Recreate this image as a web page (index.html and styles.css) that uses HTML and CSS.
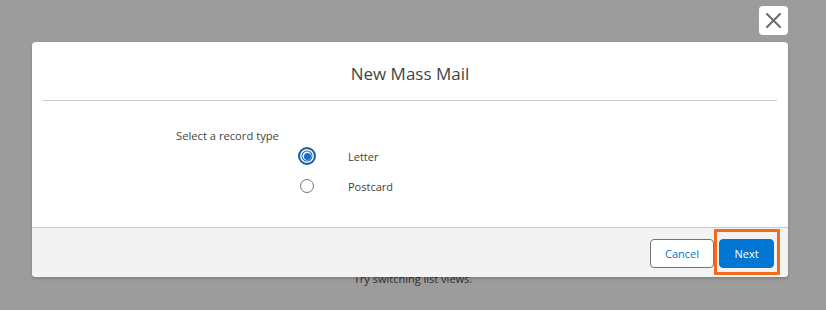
FILE: index.html
```
<!DOCTYPE html>
<html>
<head>
<meta charset="utf-8">
<link rel="stylesheet" href="styles.css">
</head>
<body>
<div class="page">
  <p class="empty-hint">Try switching list views.</p>
</div>
<button class="close-btn" aria-label="Close">
  <svg width="15" height="15" viewBox="0 0 15 15"><path d="M1 1L14 14M14 1L1 14" stroke="#6b6b6b" stroke-width="2" stroke-linecap="round"/></svg>
</button>
<section class="modal">
  <header class="modal-header">
    <h2 class="modal-title">New Mass Mail</h2>
  </header>
  <div class="modal-body">
    <div class="field-label">Select a record type</div>
    <div class="options">
      <label class="option">
        <span class="radio-box"><span class="radio checked"><span class="dot"></span></span></span>
        <span class="option-text">Letter</span>
      </label>
      <label class="option">
        <span class="radio-box"><span class="radio"></span></span>
        <span class="option-text">Postcard</span>
      </label>
    </div>
  </div>
  <footer class="modal-footer">
    <button class="btn btn-neutral">Cancel</button>
    <button class="btn btn-brand">Next</button>
    <span class="highlight"></span>
  </footer>
</section>
</body>
</html>
```
FILE: styles.css
```
html, body {
  margin: 0;
  padding: 0;
}
body {
  width: 826px;
  height: 310px;
  background: #9c9c9c;
  font-family: "Open Sans", "Noto Sans", sans-serif;
  color: #3e3e3c;
  overflow: hidden;
  position: relative;
}
.page {
  padding-top: 270px;
  text-align: center;
}
.empty-hint {
  margin: 0;
  font-size: 11px;
  line-height: 18px;
  color: #2f2f2f;
  padding-left: 0;
}
.close-btn {
  position: absolute;
  left: 759px;
  top: 6px;
  width: 29px;
  height: 29px;
  border: none;
  border-radius: 4px;
  background: #fff;
  padding: 0;
  display: flex;
  align-items: center;
  justify-content: center;
}
.modal {
  position: absolute;
  left: 32px;
  top: 42px;
  width: 756px;
  height: 235px;
  background: #fff;
  border-radius: 4px;
  box-shadow: 0 2px 3px rgba(0,0,0,0.16);
  display: flex;
  flex-direction: column;
  overflow: hidden;
}
.modal-header {
  margin: 0 11px;
  height: 58px;
  border-bottom: 1px solid #c9c9c9;
  display: flex;
  align-items: center;
  justify-content: center;
}
.modal-title {
  margin: 0;
  font-weight: 400;
  font-size: 17px;
  line-height: 24px;
  color: #444;
  padding-top: 5px;
}
.modal-body {
  flex: 1;
  padding: 26px 0 0 144px;
}
.field-label {
  font-size: 11.2px;
  line-height: 18px;
  color: #444;
}
.options {
  margin-left: 122px;
  margin-top: 2px;
  display: flex;
  flex-direction: column;
  gap: 12px;
}
.option {
  display: flex;
  align-items: center;
  height: 18px;
}
.radio-box {
  width: 18px;
  height: 18px;
  display: flex;
  align-items: center;
  justify-content: center;
  margin-right: 32px;
}
.radio {
  box-sizing: border-box;
  width: 14px;
  height: 14px;
  border: 1px solid #747474;
  border-radius: 50%;
  background: #fff;
  display: flex;
  align-items: center;
  justify-content: center;
}
.radio.checked {
  width: 18px;
  height: 18px;
  border: 2px solid #1b5fa5;
  box-shadow: inset 0 0 0 1.5px #fff, inset 0 0 0 2.5px #1b5fa5;
}
.dot {
  width: 7px;
  height: 7px;
  border-radius: 50%;
  background: #0b6fd0;
}
.option-text {
  font-size: 11px;
  color: #3e3e3c;
}
.modal-footer {
  position: relative;
  height: 50px;
  border-top: 1px solid #c9c9c9;
  background: #f3f3f3;
  display: flex;
  align-items: center;
  justify-content: flex-end;
  gap: 5px;
  padding: 2px 14px 0 0;
  box-sizing: border-box;
}
.btn {
  height: 29px;
  border-radius: 4px;
  font-family: inherit;
  font-size: 11px;
  padding: 0;
  box-sizing: border-box;
}
.btn-neutral {
  width: 64px;
  background: #fff;
  border: 1px solid #747474;
  color: #0176d3;
}
.btn-brand {
  width: 55px;
  background: #0176d3;
  border: 1px solid #0176d3;
  color: #fff;
}
.highlight {
  position: absolute;
  right: 8px;
  top: 1px;
  width: 66px;
  height: 46px;
  box-sizing: border-box;
  border: 3px solid #f26b1d;
  border-radius: 1px;
  pointer-events: none;
}
```
